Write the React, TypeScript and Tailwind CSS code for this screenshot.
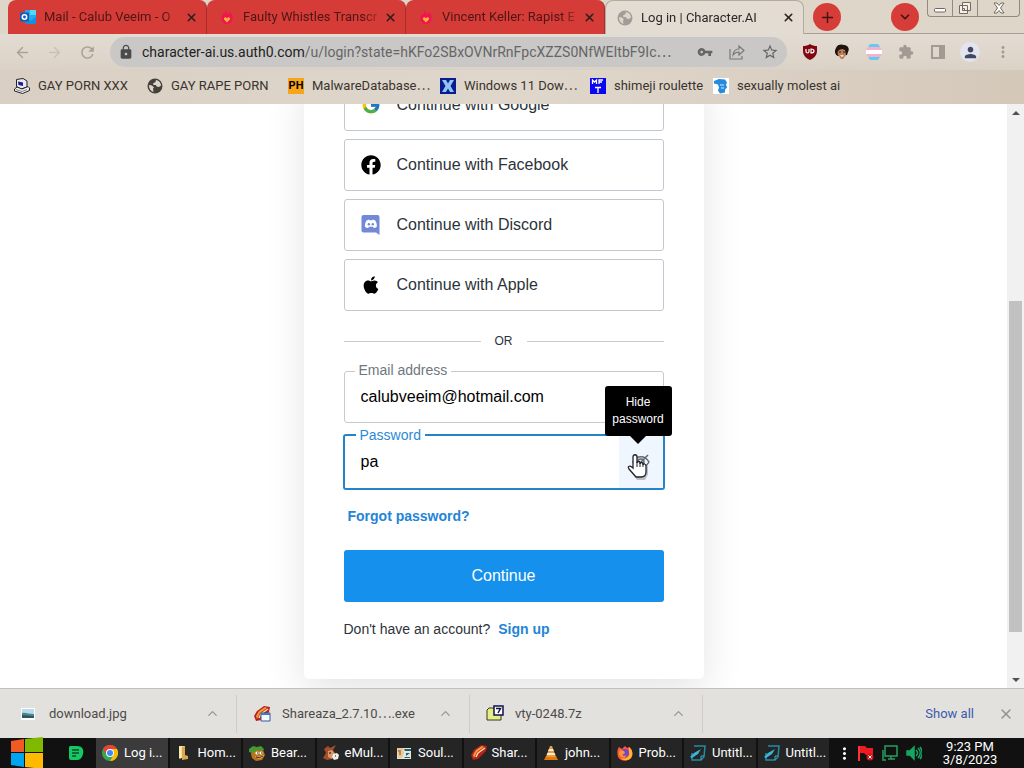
import type { ReactNode } from "react";
import {
  ArrowLeft,
  ArrowRight,
  ChevronDown,
  ChevronUp,
  Plus,
  X,
} from "lucide-react";
import { FaApple, FaFacebook } from "react-icons/fa";
import { FcGoogle } from "react-icons/fc";
import {
  MdExtension,
  MdLock,
  MdMoreVert,
  MdPerson,
  MdRefresh,
  MdStarOutline,
  MdVpnKey,
} from "react-icons/md";

const Tinder = () => (
  <svg viewBox="0 0 16 16" className="size-4">
    <path d="M6 1c.3 2 2 2.600 3 4.500C10 4.500 10.500 4 10.500 3 13 5 14 7.500 13.500 10c-.4 3-2.600 5-5.500 5s-5.300-2-5.500-5C2.300 7.500 3.500 5.500 4.500 4.500L5 6C6 5 6.400 3 6 1z" fill="#f01452" />
    <path d="M8 13.500 5.300 10.800C4.200 9.500 5.500 7.500 7.100 8.500L8 9.300l.9-.8c1.600-1 2.900 1 1.800 2.300z" fill="#ffae35" />
  </svg>
);

const Outlook = () => (
  <svg viewBox="0 0 16 16" className="size-4">
    <rect x="5" y="1" width="11" height="13" rx="1" fill="#28a8ea" />
    <path d="M10 1h6v5h-6z" fill="#50d9ff" />
    <path d="M5 8l5.500 4L16 8v6a1 1 0 0 1-1 1H6a1 1 0 0 1-1-1z" fill="#1490df" />
    <rect y="3.500" width="9" height="9" rx="1" fill="#0f62b8" />
    <circle cx="4.500" cy="8" r="2.200" fill="none" stroke="#fff" strokeWidth="1.500" />
  </svg>
);

const Globe = ({ className }: { className: string }) => (
  <svg viewBox="0 0 16 16" className={`size-4 ${className}`}>
    <circle cx="8" cy="8" r="7.500" fill="currentColor" />
    <path d="M2 7l3 .5 2 2-1 1 .5 3.500C3.500 13 1.800 10.500 2 7z" fill="#ddd5ca" />
    <path d="M9 2c3 .3 5 3 5 5.500L12 9l-2.500-.5L9 7H6.500L6 5.500 8.500 4z" fill="#ddd5ca" />
  </svg>
);

const Computer = () => (
  <svg viewBox="0 0 16 16" className="size-4">
    <path d="M2.500 1.500L9 .5l4 2.500v6l-6 2-4.500-2.500z" fill="#e8e8f8" stroke="#222" />
    <path d="M4 3.500l5 1V8L4.500 7z" fill="#1c1c8c" />
    <path d="M.5 11l2.500-2 5 2 6-2.500 1.500 1.500v2.500L8.500 15.500.5 13z" fill="#ededf6" stroke="#222" />
    <path d="M2 11.500l6 2 5-2" stroke="#888" fill="none" />
  </svg>
);

const MftIcon = () => (
  <svg viewBox="0 0 16 16" className="size-4">
    <path fill="#0b06f0" d="M0 0h16v16H0z" />
    <path d="M2.500 6V2l2 2 2-2v4M9 6V2h4M9 4h3M5 9.500h6M8 9.500V15" fill="none" stroke="#fff" strokeWidth="1.300" />
  </svg>
);

const XIcon = () => (
  <svg viewBox="0 0 16 16" className="size-4">
    <path fill="#0a1d8f" d="M0 0h16v16H0z" />
    <path d="M2 2h4l2 3.500L10 2h4l-3.500 6L14 14h-4l-2-3.500L6 14H2l3.500-6z" fill="#8fc4f4" />
  </svg>
);

const BlueHead = () => (
  <svg viewBox="0 0 16 16" className="size-4">
    <path fill="#fff" d="M0 0h16v16H0z" />
    <path d="M1 3l5-2 6 .5 2 3-1 2 1 3-2 2v3l-5 1-2-3 1-3-1-3-4-1z" fill="#238be0" />
    <path d="M7 7h4M8 10h3" stroke="#d6efff" />
  </svg>
);

const ShieldIcon = () => (
  <svg viewBox="0 0 16 16" className="size-4">
    <path d="M8 0c2 1.500 4.500 2 7 2v5c0 4.500-3 7-7 9-4-2-7-4.500-7-9V2c2.500 0 5-.5 7-2z" fill="#800610" />
    <path d="M4 5v2.500c0 2 3 2 3 0V5M9 5v4c4 0 4-4 0-4z" fill="none" stroke="#fff" strokeWidth="1.200" />
  </svg>
);

const FaceIcon = () => (
  <svg viewBox="0 0 16 16" className="size-4">
    <path d="M2 4C3 0 8 0 10 1c4 0 6 4 4 7l-1 3-9 1C1 11 0 7 2 4z" fill="#20130e" />
    <path d="M5 6l3-1 3 1 1 5-3 4H7l-3-4-.5-3z" fill="#bc8058" />
    <path d="M5 8h2m2 0h2" stroke="#371c10" />
    <path d="M6 11l4 .5-2 1.500z" fill="#fff" />
  </svg>
);

const FlagIcon = () => (
  <svg viewBox="0 0 16 16" className="size-4">
    <path d="M4 0h8l2 3H2z" fill="#67c9f1" />
    <path d="M2 3h12l2 3H0z" fill="#f3b4cb" />
    <path d="M0 6h16v4H0z" fill="#fff" />
    <path d="M0 10h16l-2 3H2z" fill="#f3b4cb" />
    <path d="M2 13h12l-2 3H4z" fill="#67c9f1" />
  </svg>
);

const ShareIcon = () => (
  <svg viewBox="0 0 16 16" className="size-4" fill="none" stroke="#777" strokeWidth="1.200">
    <path d="M1 5v10h12v-3M4 11c.5-4 2.500-6 6-6V2l5 4.500L10 11V8C7 8 5.500 9 4 11z" />
  </svg>
);

const Discord = () => (
  <svg viewBox="0 0 20 20" className="size-5">
    <path d="M2.500 0h14A2 2 0 0 1 18.500 2v18L15 17.500H2.500a2 2 0 0 1-2-2V2a2 2 0 0 1 2-2z" fill="#7289da" />
    <path d="M5.500 5.500l2.500-1 .6.700h2.500l.6-.7 2.600 1c1.200 2 1.700 4 1.500 6.200-1 .8-2 1.200-3 1.300l-.8-1.200h-3.800L7 13c-1.200-.1-2.200-.5-3.100-1.300-.1-2.200.4-4.200 1.600-6.200z" fill="#fff" />
    <circle cx="7.900" cy="9.300" r="1.200" fill="#7289da" />
    <circle cx="11.800" cy="9.300" r="1.200" fill="#7289da" />
  </svg>
);

const EyeSlash = () => (
  <svg viewBox="0 0 20 20" className="size-5" fill="none" stroke="#65676e" strokeWidth="1.500">
    <path d="M2 10c4-7 12-7 16 0-4 7-12 7-16 0zM3 17L17 3" />
    <circle cx="10" cy="10" r="3" />
  </svg>
);

const HandCursor = () => (
  <svg viewBox="0 0 22 26" className="pointer-events-none absolute top-5 right-4 h-[26px] w-[22px]">
    <path d="M6 14V3c0-3 4-3 4 0v6c0-2 3-2 3 0v1c0-2 3-2 3 0v1c0-2 3-1 3 1v7l-3 6H8l-6-9c-2-3 1-4 4-1z" transform="translate(2 1)" fill="#888" opacity=".5" />
    <path d="M6 14V3c0-3 4-3 4 0v6c0-2 3-2 3 0v1c0-2 3-2 3 0v1c0-2 3-1 3 1v6c0 4-2 5-5 5H9L2 15c-2-3 1-4 4-1z" fill="#fff" stroke="#20242d" strokeWidth="1.300" />
    <path d="M10 8v5m3-4v4m3-3v3" stroke="#20242d" />
  </svg>
);

const PhotoFile = () => (
  <svg viewBox="0 0 16 16" className="size-4">
    <path fill="#fff" d="M1 2h14v12H1z" />
    <path fill="#b9dbe9" d="M2 3h12v5H2z" />
    <path fill="#4f8792" d="M2 7c3-1 7 1 12 1v3H2z" />
    <path fill="#2c5963" d="M2 9l12 1v2H2z" />
  </svg>
);

const Shell = ({ file = false }: { file?: boolean }) => (
  <svg viewBox="0 0 18 18" className="size-[18px]">
    <path d="M1 11l3-5 7-5 6 1-1 5-8 8-5 1z" fill="#b8211c" />
    <path d="M3 11l3-5 6-4 2 1-7 5-3 6z" fill="#f2993a" />
    <path d="M6 13l2-4 7-5" stroke="#ffd9a0" strokeWidth="1.500" fill="none" />
    {file && <path d="M8 8h9v8H8z" fill="#f4f7ff" stroke="#345a9d" />}
    {file && <path d="M8 9h9" stroke="#437ac7" strokeWidth="2" />}
  </svg>
);

const SevenZip = () => (
  <svg viewBox="0 0 18 18" className="size-[18px]">
    <path d="M1 5l2-2h5l1 2h6v10H1z" fill="#e5ef87" stroke="#383818" />
    <path d="M8 1h9v9H8z" fill="#fff" stroke="#11114c" strokeWidth="1.500" />
    <path d="M10 3.500h4.500L12 8" fill="none" stroke="#11114c" strokeWidth="1.500" />
  </svg>
);

const Chrome = () => (
  <svg viewBox="0 0 16 16" className="size-4">
    <circle cx="8" cy="8" r="8" fill="#35a853" />
    <path d="M1 4a8 8 0 0 1 14 0H8a4 4 0 0 0-3.500 6z" fill="#ea4335" />
    <path d="M15 4a8 8 0 0 1-7 12l3.500-6A4 4 0 0 0 8 4z" fill="#fbbc05" />
    <circle cx="8" cy="8" r="4" fill="#fff" />
    <circle cx="8" cy="8" r="3" fill="#4285f4" />
  </svg>
);

const Folder = () => (
  <svg viewBox="0 0 16 16" className="size-4">
    <path d="M3 1h6v12H3z" fill="#f6dda0" />
    <path d="M6 2l3-1v9l3 1v3l-6 1z" fill="#d9a94c" />
    <path d="M4 2v12" stroke="#fff3c9" />
  </svg>
);

const Bear = () => (
  <svg viewBox="0 0 16 16" className="size-4">
    <path d="M3 5h11l2 5-3 5-6 1-4-3-1-4z" fill="#b97420" />
    <path d="M0 4l4-3 4 1 4-1 3 3-1 2-6-1-5 3-3-1z" fill="#459b32" />
    <circle cx="8" cy="8" r="1.600" fill="#fff" />
    <circle cx="12" cy="8" r="1.500" fill="#fff" />
    <path d="M8 8h1m3 0h1" stroke="#1c130b" />
    <path d="M6 11c3 1 6 0 9-1-1 4-6 5-9 1z" fill="#f2c46b" />
    <path d="M7 12c3 1 5 0 7-1" stroke="#3b1c0b" fill="none" />
  </svg>
);

const Donkey = () => (
  <svg viewBox="0 0 16 16" className="size-4">
    <path d="M1 4l4-3 2 2 6-3-3 5 2 3-3 6-5 1-4-2 3-5z" fill="#a54d2c" />
    <path d="M5 6l4-1 3 4-3 5-4-2z" fill="#d89767" />
    <path d="M10 9l4-1 2 2-1 4-4 1-2-3z" fill="#f0eeea" />
    <path d="M7 7v2m5 2h1" stroke="#111" />
  </svg>
);

const Soulseek = () => (
  <svg viewBox="0 0 16 16" className="size-4">
    <path d="M1 3h14v11H1z" fill="#dceae1" />
    <path d="M1 3h6l1 5-2 5H2z" fill="#efc795" />
    <path d="M8 4h7v2H9zm2 4h4l-4 3zm-1 4h5v1H8z" fill="#295e68" />
    <path d="M2 6h3M4 7v3" stroke="#704d2a" />
  </svg>
);

const Cone = () => (
  <svg viewBox="0 0 16 16" className="size-4">
    <path d="M3 11h10l2 4H1z" fill="#e27a0b" />
    <path d="M7 1h2l4 11H3z" fill="#f19b35" />
    <path d="M6 4h4l1 2H5zM4.500 8h7l1 2h-9z" fill="#eee" />
  </svg>
);

const Fox = () => (
  <svg viewBox="0 0 16 16" className="size-4">
    <path d="M2 2l3 2 3-3 2 2 2-1c4 3 5 9 1 12-4 3-10 2-12-2C0 8 0 5 2 2z" fill="#ff563b" />
    <path d="M12 2c4 3 4 8 2 11-3 3-8 3-10 0 6 2 9-2 8-6z" fill="#ffb72f" />
    <circle cx="8" cy="8" r="4" fill="#7445c6" />
    <path d="M3 5l4 1 1 2-3 2c3 2 5 0 5-1-1 5-8 4-8-1z" fill="#ff9830" />
  </svg>
);

const Notepad = () => (
  <svg viewBox="0 0 16 16" className="size-4">
    <path d="M4 1h11l-1 11-3 3H2V8" fill="none" stroke="#248ba5" strokeWidth="1.500" />
    <path d="M0 12l4-4 7-4-3 5-6 4z" fill="#38b8d6" />
    <path d="M11 15v-4h3" fill="none" stroke="#40a9c0" />
  </svg>
);

const WindowsLogo = () => (
  <svg viewBox="0 0 34 32" className="h-8 w-[34px]">
    <path fill="#f15a24" d="M1 4l13-2v13H1z" />
    <path fill="#7fba00" d="M15 2l18-2v15H15z" />
    <path fill="#00a4ef" d="M1 16h13v14L1 28z" />
    <path fill="#ffb900" d="M15 16h18v16l-18-2z" />
  </svg>
);

const tabs: { icon: ReactNode; title: string }[] = [
  { icon: <Outlook />, title: "Mail - Calub Veeim - O" },
  { icon: <Tinder />, title: "Faulty Whistles Transcr" },
  { icon: <Tinder />, title: "Vincent Keller: Rapist E" },
  { icon: <Globe className="text-[#a09c97]" />, title: "Log in | Character.AI" },
];

const bookmarks: { icon: ReactNode; title: string; width: string }[] = [
  { icon: <Computer />, title: "GAY PORN XXX", width: "w-[133px]" },
  { icon: <Globe className="text-[#45413d]" />, title: "GAY RAPE PORN", width: "w-[141px]" },
  {
    icon: <span className="flex size-4 items-center justify-center bg-[#f9a51a] text-[11px] font-bold text-black">PH</span>,
    title: "MalwareDatabase⋯",
    width: "w-[152px]",
  },
  { icon: <XIcon />, title: "Windows 11 Dow⋯", width: "w-[150px]" },
  { icon: <MftIcon />, title: "shimeji roulette", width: "w-[123px]" },
  { icon: <BlueHead />, title: "sexually molest ai", width: "w-[140px]" },
];

const providers: { icon: ReactNode; name: string }[] = [
  { icon: <FcGoogle className="size-5" />, name: "Google" },
  { icon: <FaFacebook className="size-5" />, name: "Facebook" },
  { icon: <Discord />, name: "Discord" },
  { icon: <FaApple className="size-5" />, name: "Apple" },
];

const downloads: { icon: ReactNode; name: string }[] = [
  { icon: <PhotoFile />, name: "download.jpg" },
  { icon: <Shell file />, name: "Shareaza_2.7.10⋯.exe" },
  { icon: <SevenZip />, name: "vty-0248.7z" },
];

const tasks: { icon: ReactNode; name: string }[] = [
  { icon: <Chrome />, name: "Log i..." },
  { icon: <Folder />, name: "Hom..." },
  { icon: <Bear />, name: "Bear..." },
  { icon: <Donkey />, name: "eMul..." },
  { icon: <Soulseek />, name: "Soul..." },
  { icon: <Shell />, name: "Shar..." },
  { icon: <Cone />, name: "john..." },
  { icon: <Fox />, name: "Prob..." },
  { icon: <Notepad />, name: "Untitl..." },
  { icon: <Notepad />, name: "Untitl..." },
];

function TabStrip() {
  return (
    <div className="flex h-[34px] shrink-0 pl-2">
      {tabs.map((tab, i) => {
        const active = i === tabs.length - 1;
        return (
          <div
            key={tab.title}
            className={
              active
                ? "flex w-[199px] items-center rounded-t-lg border-x border-t border-[#b5aa9e] bg-[#e3dcd2] pr-2 pl-[11px] text-[#2b2825]"
                : "flex w-[199px] items-center rounded-t-lg border-r border-[#a82e2b] bg-[#d53b37] pr-2 pl-3 text-[#4c1715]"
            }
          >
            <span className="shrink-0">{tab.icon}</span>
            <span className="ml-2 flex-1 overflow-hidden whitespace-nowrap [mask-image:linear-gradient(to_right,black_85%,transparent)]">
              {tab.title}
            </span>
            <button aria-label="Close tab" className="text-[#2d211e]">
              <X size={13} strokeWidth={3} />
            </button>
          </div>
        );
      })}
      <div className="flex flex-1 items-start justify-between border-b border-[#a99f94] pl-[9px]">
        <button aria-label="New tab" className="mt-[3px] flex size-7 items-center justify-center rounded-full bg-[#d63d39] text-[#421412]">
          <Plus size={17} />
        </button>
        <div className="flex items-start gap-2 pr-1">
          <button aria-label="Search tabs" className="mt-[3px] flex size-7 items-center justify-center rounded-full bg-[#d63d39] text-[#421412]">
            <ChevronDown size={14} strokeWidth={3} />
          </button>
          <div className="flex h-[17px] rounded-b border border-t-0 border-[#94897e]">
            <button aria-label="Minimize" className="flex w-[25px] items-center justify-center border-r border-[#94897e]">
              <svg viewBox="0 0 12 12" className="size-3"><rect x=".5" y="6.500" width="11" height="3.500" rx="1" fill="#fff" stroke="#716961" /></svg>
            </button>
            <button aria-label="Restore" className="flex w-[25px] items-center justify-center border-r border-[#94897e]">
              <svg viewBox="0 0 14 14" className="size-3.5" fill="#f5f0e9" stroke="#716961"><path d="M4.500 1.500h8v8h-8zM1.500 4.500h8v8h-8z" /><path d="M4.500 7.500h2v2h-2z" /></svg>
            </button>
            <button aria-label="Close" className="flex w-[41px] items-center justify-center">
              <svg viewBox="0 0 12 12" className="size-3"><path d="M1 1h3l2 2.500L8 1h3L7.500 6l3.500 5H8L6 8.500 4 11H1l3.500-5z" fill="#fff" stroke="#716961" /></svg>
            </button>
          </div>
        </div>
      </div>
    </div>
  );
}

function Toolbar() {
  return (
    <div className="flex h-9 shrink-0 items-center bg-linear-to-b from-[#e3dcd2] to-[#dbd2c7]">
      <div className="flex w-[110px] items-center gap-[15px] pl-3.5 text-[#aaa198]">
        <button aria-label="Back"><ArrowLeft size={17} /></button>
        <button aria-label="Forward" className="text-[#c9c1b7]"><ArrowRight size={17} /></button>
        <button aria-label="Reload"><MdRefresh size={19} /></button>
      </div>
      <div className="flex h-[30px] min-w-0 flex-1 items-center rounded-full bg-[#c9c8c6] px-2 text-[#666]">
        <MdLock className="size-4 shrink-0 text-[#4b4b4b]" />
        <div className="ml-2 min-w-0 flex-1 overflow-hidden text-sm whitespace-nowrap text-[#666]">
          <span className="text-[#222]">character-ai.us.auth0.com</span>/u/login?state=hKFo2SBxOVNrRnFpcXZZS0NfWEItbF9Ic⋯
        </div>
        <div className="flex items-center gap-4 pl-2">
          <button aria-label="Passwords"><MdVpnKey size={16} /></button>
          <button aria-label="Share"><ShareIcon /></button>
          <button aria-label="Bookmark"><MdStarOutline size={18} /></button>
        </div>
      </div>
      <div className="flex items-center gap-4 pr-3 pl-[15px] text-[#a39b93]">
        <ShieldIcon />
        <FaceIcon />
        <FlagIcon />
        <MdExtension size={16} />
        <svg viewBox="0 0 16 16" className="size-4"><path d="M2 2h12v12H2z" fill="none" stroke="#a39b93" strokeWidth="2" /><path d="M9 2h5v12H9z" fill="#a39b93" /></svg>
        <span className="-mx-0.5 flex size-5 items-center justify-center rounded-full bg-[#e4e4ef] text-[#414864]"><MdPerson size={17} /></span>
        <button aria-label="Browser menu"><MdMoreVert size={18} /></button>
      </div>
    </div>
  );
}

function BookmarkBar() {
  return (
    <div className="flex h-[34px] shrink-0 items-center bg-linear-to-r from-[#d9cfc3] via-[#e0d7cc] to-[#d4c8b9] pb-0.5 pl-3.5">
      {bookmarks.map((b) => (
        <a key={b.title} href="#" className={`flex shrink-0 items-center gap-2 whitespace-nowrap text-[#39342f] ${b.width}`}>
          {b.icon}
          {b.title}
        </a>
      ))}
    </div>
  );
}

function LoginCard() {
  return (
    <main className="w-[400px] shrink-0 rounded-[5px] bg-white px-10 pb-10 text-[#2d333a] shadow-[0_12px_40px_rgba(0,0,0,0.11)]">
      <div className="flex flex-col gap-2">
        {providers.map((p) => (
          <button key={p.name} className="flex h-[52px] items-center gap-4 rounded-[3px] border border-[#c2c8d0] px-4 text-base">
            <span className="text-black">{p.icon}</span>
            Continue with {p.name}
          </button>
        ))}
      </div>
      <div className="flex h-[60px] items-center gap-3.5 text-xs before:h-px before:flex-1 before:bg-[#c9cace] after:h-px after:flex-1 after:bg-[#c9cace]">
        OR
      </div>
      <div className="relative">
        <label htmlFor="email" className="absolute -top-[11px] left-[11px] bg-white px-1 text-sm text-[#6f7780]">Email address</label>
        <input id="email" type="email" defaultValue="calubveeim@hotmail.com" className="block h-[52px] w-full rounded-[3px] border border-[#c9cace] px-4 text-base text-black outline-none" />
      </div>
      <div className="relative -mx-px mt-[11px]">
        <label htmlFor="password" className="absolute -top-[9px] left-[13px] z-10 bg-white px-1 text-sm text-[#2b8ad6]">Password</label>
        <div className="flex h-14 overflow-hidden rounded-[3px] border-2 border-[#2683c6]">
          <input id="password" type="text" defaultValue="pa" className="min-w-0 flex-1 px-4 text-base text-black outline-none" />
          <button aria-label="Hide password" className="flex w-11 items-center justify-center bg-[#eff6fe]">
            <EyeSlash />
          </button>
        </div>
        <div role="tooltip" className="absolute -top-12 -right-[7px] flex h-[50px] w-[67px] items-center justify-center rounded-[3px] bg-black text-center text-xs leading-[17px] text-white after:absolute after:top-full after:border-8 after:border-b-0 after:border-transparent after:border-t-black">
          Hide password
        </div>
        <HandCursor />
      </div>
      <a href="#" className="mt-4 ml-1 block w-fit text-sm font-bold text-[#2485d6]">Forgot password?</a>
      <button className="mt-6 block h-[52px] w-full rounded-[3px] bg-[#1590ed] text-base text-white">Continue</button>
      <p className="mt-[17px] text-sm">
        Don't have an account?
        <a href="#" className="ml-2 font-bold text-[#2485d6]">Sign up</a>
      </p>
    </main>
  );
}

function ScrollBar() {
  return (
    <div className="flex w-[17px] shrink-0 flex-col bg-[#f1f1f1]">
      <div className="flex h-[17px] items-center justify-center"><svg viewBox="0 0 8 4" className="h-1 w-2"><path d="M0 4l4-4 4 4z" fill="#505050" /></svg></div>
      <div className="flex-[180]" />
      <div className="mx-0.5 flex-[331] bg-[#c1c1c1]" />
      <div className="flex-[39]" />
      <div className="flex h-[17px] items-center justify-center"><svg viewBox="0 0 8 4" className="h-1 w-2"><path d="M0 0l4 4 4-4z" fill="#505050" /></svg></div>
    </div>
  );
}

function DownloadBar() {
  return (
    <div className="flex h-[50px] shrink-0 items-center border-t border-[#c3c0bc] bg-[#e3e1de] pl-1 text-[#4d4b48]">
      {downloads.map((d) => (
        <div key={d.name} className="flex h-[38px] w-[233px] items-center border-r border-[#cfccc8] pr-4 pl-4">
          <span className="w-[29px] shrink-0">{d.icon}</span>
          <span className="flex-1 whitespace-nowrap">{d.name}</span>
          <button aria-label={`Options for ${d.name}`}><ChevronUp size={15} className="text-[#989592]" /></button>
        </div>
      ))}
      <div className="flex flex-1 items-center justify-end gap-6 pr-2.5">
        <button className="text-[#3a5bab]">Show all</button>
        <button aria-label="Close downloads"><X size={16} className="text-[#918e8b]" /></button>
      </div>
    </div>
  );
}

function TaskBar() {
  return (
    <div className="flex h-[30px] shrink-0 items-center bg-[#111] text-white">
      <button aria-label="Start" className="flex w-[60px] justify-center pr-1.5"><WindowsLogo /></button>
      <button aria-label="Notes" className="flex w-9 justify-center pr-1">
        <svg viewBox="0 0 16 16" className="size-4"><path d="M2 1h7c5 0 7 3 6 8-1 4-3 6-6 6H3q-2 0-2-2V2z" fill="#12c964" /><path d="M4 5h7M4 8h7M4 11h4" stroke="#124a2c" strokeWidth="1.500" /></svg>
      </button>
      <div className="flex h-full w-[735px]">
        {tasks.map((task, i) => (
          <button
            key={i}
            className={
              i === 0
                ? "flex flex-1 items-center gap-1 border-r-2 border-[#111] bg-[#3b3b3b] pl-1.5 text-left whitespace-nowrap"
                : "flex flex-1 items-center gap-1 border-r-2 border-[#111] bg-[#252525] pl-1.5 text-left whitespace-nowrap"
            }
          >
            <span className="w-[18px] shrink-0">{task.icon}</span>
            {task.name}
          </button>
        ))}
      </div>
      <div className="flex flex-1 items-center gap-2 pl-1">
        <MdMoreVert size={19} className="-mr-1 shrink-0" />
        <svg viewBox="0 0 16 16" className="size-4 shrink-0"><path d="M1 1v15" stroke="#f33" strokeWidth="2" /><path d="M2 1h5l2 2h6v7H8L6 8H2z" fill="#ed1c24" /><circle cx="12" cy="12" r="3.500" fill="#c9151c" /><path d="M10.500 10.500l3 3m0-3l-3 3" stroke="#fff" /></svg>
        <svg viewBox="0 0 16 16" className="size-4 shrink-0" fill="none" stroke="#269e60" strokeWidth="1.500"><path d="M3 1h12v10H3zM6 14h7M9 11v3M1 5v10h3" /></svg>
        <svg viewBox="0 0 16 16" className="size-4 shrink-0" fill="none" stroke="#13a763" strokeWidth="1.500"><path d="M1 6h3l4-4v12l-4-4H1z" fill="#13a763" /><path d="M10 5c2 2 2 4 0 6M12 3c3 3 3 7 0 10M14 2c3 4 3 8 0 12" /></svg>
        <div className="flex-1 pr-3.5 text-center leading-[13px]">9:23 PM<br />3/8/2023</div>
      </div>
    </div>
  );
}

export default function App() {
  return (
    <div className="flex h-screen flex-col overflow-hidden bg-[#dfd6ca] font-['Roboto','Noto_Sans_CJK_KR',sans-serif] text-[13px]">
      <TabStrip />
      <Toolbar />
      <BookmarkBar />
      <div className="flex min-h-0 flex-1 bg-white font-['Liberation_Sans',sans-serif]">
        <div className="flex min-w-0 flex-1 flex-col items-center justify-end overflow-hidden pb-[9px]">
          <LoginCard />
        </div>
        <ScrollBar />
      </div>
      <DownloadBar />
      <TaskBar />
    </div>
  );
}
